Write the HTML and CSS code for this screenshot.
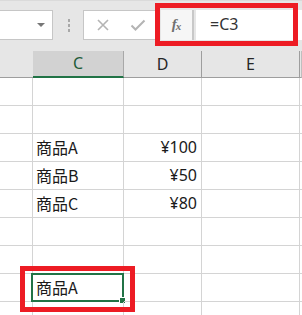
FILE: index.html
```html
<!DOCTYPE html>
<html>
<head>
<meta charset="utf-8">
<link rel="stylesheet" href="styles.css">
</head>
<body>
<div class="app">
  <div class="bar">
    <div class="namebox"><span class="arrow"></span></div>
    <div class="dots"><i></i><i></i><i></i></div>
    <div class="btns">
      <svg class="ico" width="14" height="14" viewBox="0 0 14 14"><path d="M2 2L12 12M12 2L2 12" stroke="#b4b4b4" stroke-width="1.6" fill="none"/></svg>
      <svg class="ico chk" width="16" height="14" viewBox="0 0 16 14"><path d="M1.5 7.5L5.5 11.5L14.5 2.5" stroke="#b4b4b4" stroke-width="2" fill="none"/></svg>
    </div>
    <div class="fx"><span class="f">f</span><span class="x">x</span></div>
    <div class="formula">=C3</div>
  </div>
  <div class="grid">
    <div class="row head">
      <div class="c c1"></div>
      <div class="c c2 sel">C</div>
      <div class="c c3">D</div>
      <div class="c c4">E</div>
      <div class="c c5"></div>
    </div>
    <div class="row"><div class="c c1"></div><div class="c c2"></div><div class="c c3"></div><div class="c c4"></div><div class="c c5"></div></div>
    <div class="row"><div class="c c1"></div><div class="c c2"></div><div class="c c3"></div><div class="c c4"></div><div class="c c5"></div></div>
    <div class="row"><div class="c c1"></div><div class="c c2 t">商品A</div><div class="c c3 n">¥100</div><div class="c c4"></div><div class="c c5"></div></div>
    <div class="row"><div class="c c1"></div><div class="c c2 t">商品B</div><div class="c c3 n">¥50</div><div class="c c4"></div><div class="c c5"></div></div>
    <div class="row"><div class="c c1"></div><div class="c c2 t">商品C</div><div class="c c3 n">¥80</div><div class="c c4"></div><div class="c c5"></div></div>
    <div class="row"><div class="c c1"></div><div class="c c2"></div><div class="c c3"></div><div class="c c4"></div><div class="c c5"></div></div>
    <div class="row"><div class="c c1"></div><div class="c c2"></div><div class="c c3"></div><div class="c c4"></div><div class="c c5"></div></div>
    <div class="row"><div class="c c1"></div><div class="c c2 t active">商品A<span class="handle"></span></div><div class="c c3"></div><div class="c c4"></div><div class="c c5"></div></div>
    <div class="row"><div class="c c1"></div><div class="c c2"></div><div class="c c3"></div><div class="c c4"></div><div class="c c5"></div></div>
  </div>
  <div class="mark mark-top"></div>
  <div class="mark mark-cell"></div>
</div>
</body>
</html>
```
FILE: styles.css
```css
html, body { margin: 0; padding: 0; background: #fff; }
.app { position: relative; width: 302px; height: 315px; overflow: hidden; font-family: "Noto Sans CJK JP", "Noto Sans", sans-serif; }
.bar { height: 51px; background: #e6e6e6; display: flex; align-items: flex-start; padding-top: 10px; box-sizing: border-box; border-top: 1px solid #dadada; }
.bar > div { height: 30px; box-sizing: border-box; }
.namebox { width: 53px; margin-top: -1px; background: #fff; border: 1px solid #c6c6c6; border-left: none; position: relative; }
.arrow { position: absolute; left: 37px; top: 12px; width: 0; height: 0; border-left: 4px solid transparent; border-right: 4px solid transparent; border-top: 4px solid #777; }
.dots { width: 4px; margin-left: 14px; margin-top: -1px; display: flex; flex-direction: column; align-items: center; justify-content: center; gap: 2px; }
.dots i { display: block; width: 2px; height: 3px; background: #a8a8a8; }
.btns { margin-left: 12px; margin-top: -1px; width: 74px; background: #fff; border: 1px solid #c6c6c6; display: flex; align-items: center; padding-left: 12px; gap: 20px; }
.fx { margin-left: 4px; margin-top: -1px; width: 33px; background: #f6f6f6; border-right: 2px solid #c8c8c8; display: flex; align-items: center; justify-content: center; font-family: "Liberation Serif", serif; font-style: italic; font-weight: bold; color: #707070; padding-bottom: 2px; }
.fx .f { font-size: 15px; }
.fx .x { font-size: 11px; margin-top: 4px; margin-left: -1px; }
.formula { margin-left: 2px; margin-top: -1px; flex: 1; background: #fff; font-family: "Noto Sans", sans-serif; font-size: 16px; color: #333; line-height: 29px; padding-left: 14px; }
.grid { display: flex; flex-direction: column; }
.row { display: flex; height: 28px; }
.row.head { height: 27px; background: #e6e6e6; }
.c { box-sizing: border-box; height: 100%; border-right: 1px solid #d4d4d4; border-bottom: 1px solid #d4d4d4; position: relative; }
.c1 { width: 33px; }
.c2 { width: 91px; }
.c3 { width: 78px; }
.c4 { width: 98px; }
.c5 { flex: 1; border-right: none; }
.head .c { border-right: 1px solid #bfbfbf; border-bottom: 1px solid #9e9e9e; font-family: "Noto Sans", sans-serif; font-size: 16px; color: #262626; text-align: center; line-height: 26px; }
.head .c1 { border-right: none; }
.head .c2 { border-right-color: #a8a8a8; }
.head .c3 { border-right-color: #9e9e9e; }
.head .c4 { border-right-color: #9e9e9e; }
.head .sel { background: #d2d2d2; color: #1f5c3a; border-bottom: 2px solid #217346; line-height: 25px; }
.t { font-size: 16px; line-height: 27px; padding-left: 3px; color: #1a1a1a; }
.n { font-family: "Noto Sans", sans-serif; font-size: 16px; line-height: 27px; text-align: right; padding-right: 4px; color: #1a1a1a; }
.active::before { content: ""; position: absolute; left: -2px; top: -1px; right: -1px; bottom: -1px; border: 2px solid #217346; }
.handle { position: absolute; right: -3px; bottom: -3px; width: 5px; height: 5px; background: #217346; border: 1px solid #fff; }
.mark { position: absolute; border: 5px solid #ed1c24; box-sizing: border-box; }
.mark-top { left: 155px; top: 3px; width: 143px; height: 43px; }
.mark-cell { left: 20px; top: 266px; width: 115px; height: 46px; }
```
